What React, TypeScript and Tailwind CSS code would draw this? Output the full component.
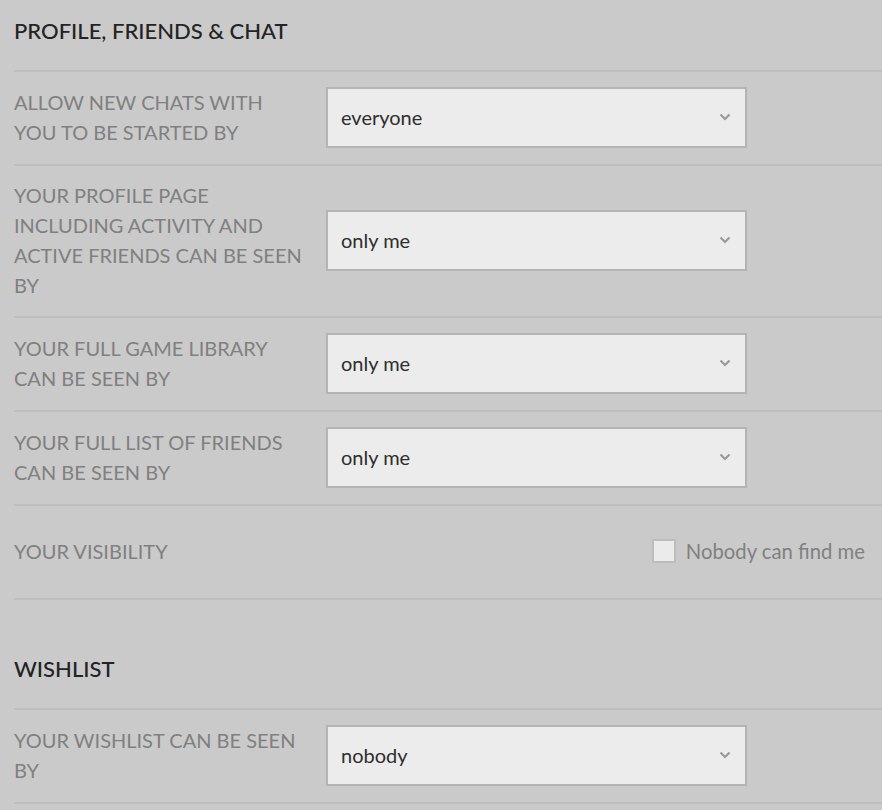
import React from 'react';

type SelectRow = { label: string; value: string };

const profileRows: SelectRow[] = [
  { label: 'ALLOW NEW CHATS WITH YOU TO BE STARTED BY', value: 'everyone' },
  { label: 'YOUR PROFILE PAGE INCLUDING ACTIVITY AND ACTIVE FRIENDS CAN BE SEEN BY', value: 'only me' },
  { label: 'YOUR FULL GAME LIBRARY CAN BE SEEN BY', value: 'only me' },
  { label: 'YOUR FULL LIST OF FRIENDS CAN BE SEEN BY', value: 'only me' },
];

function Chevron() {
  return (
    <svg width="12" height="8" viewBox="0 0 12 8" className="shrink-0">
      <polyline points="1.5,1.5 6,6 10.5,1.5" fill="none" stroke="#9a9a9a" strokeWidth="2.2" />
    </svg>
  );
}

function Row({ children }: { children: React.ReactNode }) {
  return (
    <div className="flex min-h-[94px] items-center border-t-2 border-[#bebebe] pt-[14px] pb-[16px]">{children}</div>
  );
}

function Label({ text }: { text: string }) {
  return (
    <div className="w-[312px] shrink-0 pr-[22px] text-[20px] leading-[30px] text-[#808080]">{text}</div>
  );
}

function FakeSelect({ value }: { value: string }) {
  return (
    <div className="flex h-[61px] w-[421px] items-center justify-between border-2 border-[#b4b4b4] bg-[#ececec] pl-[13px] pr-[14px]">
      <span className="text-[20px] text-[#2e2e2e]">{value}</span>
      <Chevron />
    </div>
  );
}

function Heading({ text }: { text: string }) {
  return <h2 className="pt-[17px] pb-[25px] text-[22px] leading-[28px] font-medium text-[#232323]">{text}</h2>;
}

export default function App() {
  return (
    <div className="min-h-screen bg-[#cacaca] pl-[14px]" style={{ fontFamily: 'Lato, "Open Sans", sans-serif' }}>
      <section className="border-b-2 border-[#bebebe]">
        <Heading text="PROFILE, FRIENDS & CHAT" />
        {profileRows.map((r) => (
          <Row key={r.label}>
            <Label text={r.label} />
            <FakeSelect value={r.value} />
          </Row>
        ))}
        <Row>
          <div className="flex w-full items-center justify-between pr-[17px]">
            <span className="text-[20px] leading-[30px] text-[#808080]">YOUR VISIBILITY</span>
            <label className="flex items-center gap-[10px]">
              <span className="h-[24px] w-[24px] border-2 border-[#bcbcbc] bg-[#ebebeb]" />
              <span className="text-[20.3px] text-[#808080]">Nobody can find me</span>
            </label>
          </div>
        </Row>
      </section>
      <section className="mt-[38px] border-b-2 border-[#bebebe]">
        <Heading text="WISHLIST" />
        <Row>
          <Label text="YOUR WISHLIST CAN BE SEEN BY" />
          <FakeSelect value="nobody" />
        </Row>
      </section>
    </div>
  );
}
